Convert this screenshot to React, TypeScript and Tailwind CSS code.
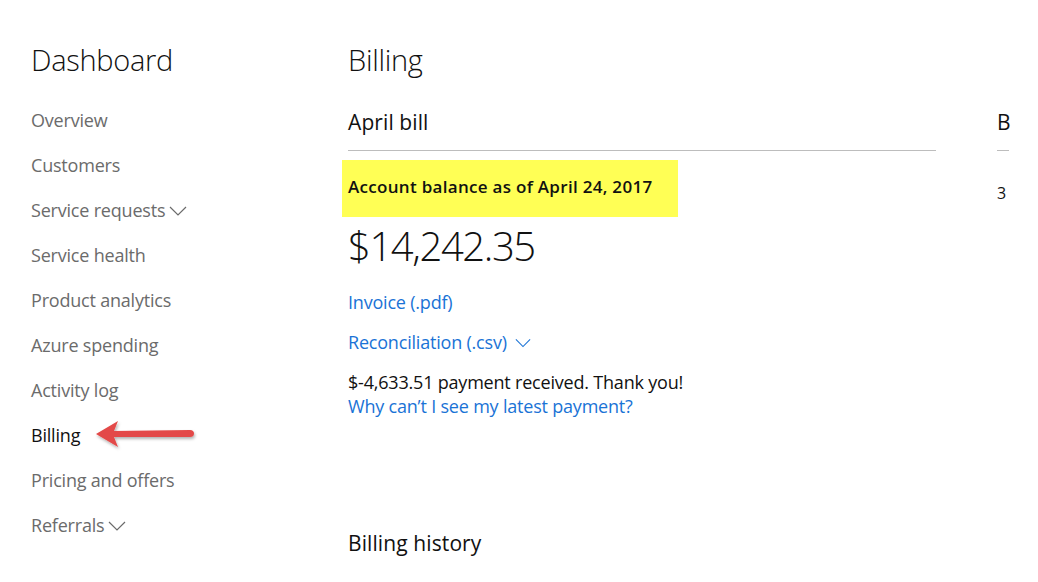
import React from "react";

function Chevron({ className = "" }: { className?: string }) {
  return (
    <svg className={className} width="18" height="10" viewBox="0 0 18 10" fill="none">
      <path d="M1 1 L9 9 L17 1" stroke="currentColor" strokeWidth="1.2" />
    </svg>
  );
}

const nav = [
  { label: "Overview" },
  { label: "Customers" },
  { label: "Service requests", chevron: true },
  { label: "Service health" },
  { label: "Product analytics" },
  { label: "Azure spending" },
  { label: "Activity log" },
  { label: "Billing", active: true },
  { label: "Pricing and offers" },
  { label: "Referrals", chevron: true },
];

export default function App() {
  return (
    <div className="w-[1038px] h-[582px] bg-white overflow-hidden flex font-['Open_Sans',sans-serif]">
      <aside className="w-[316px] shrink-0 pl-[31px] pt-[40px]">
        <h1 className="text-[29px] font-light text-[#111] leading-[40px] tracking-[-0.3px]">Dashboard</h1>
        <ul className="mt-[17px] flex flex-col">
          {nav.map((n) => (
            <li
              key={n.label}
              className={`h-[45px] flex items-center text-[18px] leading-none tracking-[-0.2px] ${n.active ? "text-[#111]" : "text-[#6b6b6b]"}`}
            >
              <span>{n.label}</span>
              {n.chevron && <Chevron className="ml-[4px] mt-[2px] text-[#6b6b6b]" />}
              {n.active && (
                <svg className="ml-[12px]" width="110" height="34" viewBox="0 0 110 34">
                  <defs>
                    <filter id="sh" x="-10%" y="-30%" width="130%" height="170%">
                      <feDropShadow dx="1" dy="2" stdDeviation="1.5" floodColor="#000" floodOpacity="0.3" />
                    </filter>
                  </defs>
                  <g filter="url(#sh)">
                    <path d="M4 16 L26 3 L22 13 L98 12 Q102 12 102 15.5 Q102 19 98 19 L22 19 L26 29 Z" fill="#e34a48" />
                  </g>
                </svg>
              )}
            </li>
          ))}
        </ul>
      </aside>
      <main className="flex-1 flex pt-[40px]">
        <section className="w-[620px] shrink-0 pl-[32px]">
          <h2 className="text-[29px] font-light text-[#111] leading-[40px] tracking-[-0.3px]">Billing</h2>
          <div className="mt-[29px] border-b border-[#bdbdbd] pb-[15px]">
            <h3 className="text-[21px] text-[#111] leading-[26px] tracking-[0.1px]">April bill</h3>
          </div>
          <div className="mt-[9px] -ml-[6px] w-[336px] h-[57px] bg-[#ffff55] flex items-center pl-[6px] pb-[3px]">
            <span className="text-[17px] font-semibold text-[#111] tracking-[0.3px]">Account balance as of April 24, 2017</span>
          </div>
          <div className="mt-[5px] text-[40px] font-light text-[#111] leading-[48px] tracking-[-1.4px]">$14,242.35</div>
          <div className="mt-[22px] h-[20px] flex items-center text-[18px] text-[#1a73d6] tracking-[-0.2px]">Invoice (.pdf)</div>
          <div className="mt-[20px] h-[20px] flex items-center text-[18px] text-[#1a73d6] tracking-[-0.2px]">
            Reconciliation (.csv)
            <Chevron className="ml-[8px] mt-[2px] w-[16px]" />
          </div>
          <div className="mt-[20px] h-[20px] flex items-center text-[18px] text-[#111] tracking-[-0.2px]">$-4,633.51 payment received. Thank you!</div>
          <div className="mt-[4px] h-[20px] flex items-center text-[18px] text-[#1a73d6] tracking-[-0.2px]">Why can’t I see my latest payment?</div>
          <h3 className="mt-[114px] text-[21px] text-[#111] leading-[26px] tracking-[0.1px]">Billing history</h3>
        </section>
        <section className="pl-[61px] pt-[40px]">
          <div className="w-[12px]">
            <div className="mt-[29px] border-b border-[#bdbdbd] pb-[15px]">
              <div className="text-[21px] text-[#111] leading-[26px]">B</div>
            </div>
            <div className="mt-[30px] text-[16px] text-[#111]">3</div>
          </div>
        </section>
      </main>
    </div>
  );
}
